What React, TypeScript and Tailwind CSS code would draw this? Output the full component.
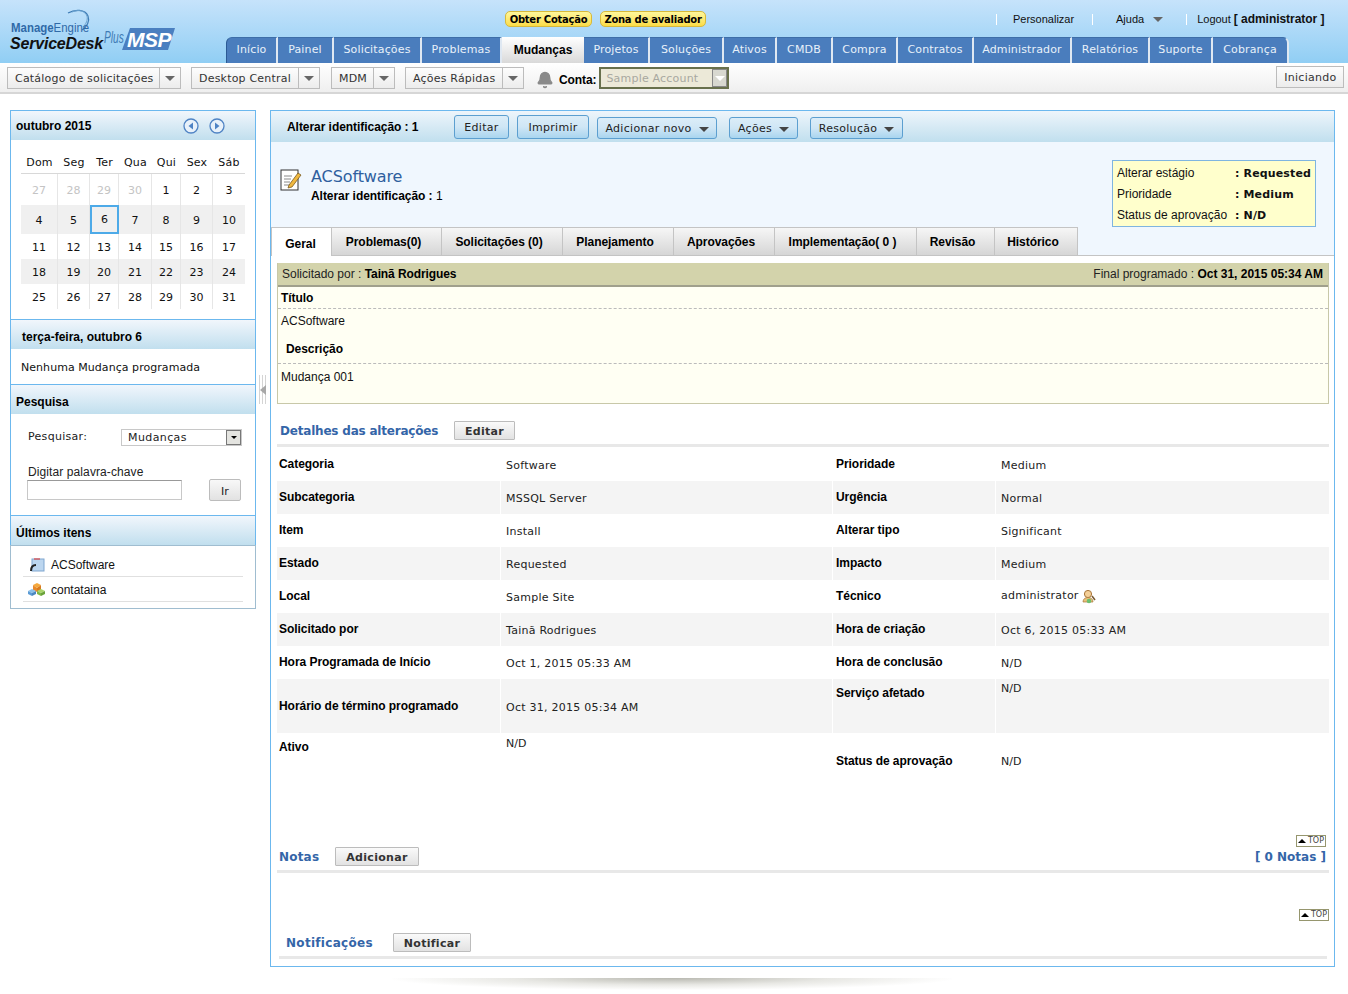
import { Bell } from "lucide-react";

const arial = "font-['Liberation_Sans',Arial,sans-serif]";
const verd = "font-['DejaVu_Sans',Verdana,sans-serif]";

const navTabs = [
  ["Início", "w-[52px]", "rounded-tl-[6px] border-l border-l-[#2b5a94]"],
  ["Painel", "w-[56px]", ""],
  ["Solicitações", "w-[88px]", ""],
  ["Problemas", "w-[80px]", ""],
  ["Mudanças", "w-[82px]", "active"],
  ["Projetos", "w-[66px]", ""],
  ["Soluções", "w-[74px]", ""],
  ["Ativos", "w-[53px]", ""],
  ["CMDB", "w-[56px]", ""],
  ["Compra", "w-[65px]", ""],
  ["Contratos", "w-[76px]", ""],
  ["Administrador", "w-[98px]", ""],
  ["Relatórios", "w-[78px]", ""],
  ["Suporte", "w-[63px]", ""],
  ["Cobrança", "w-[76px]", "rounded-tr-[6px] border-r border-r-[#2b5a94]"],
];

const calDays = ["Dom", "Seg", "Ter", "Qua", "Qui", "Sex", "Sáb"];
const calRows = [
  { h: "h-[31px]", bg: "", days: ["27", "28", "29", "30", "1", "2", "3"] },
  { h: "h-[29px]", bg: "bg-[#f0f0f0]", days: ["4", "5", "6", "7", "8", "9", "10"] },
  { h: "h-[25px]", bg: "", days: ["11", "12", "13", "14", "15", "16", "17"] },
  { h: "h-[25px]", bg: "bg-[#f0f0f0]", days: ["18", "19", "20", "21", "22", "23", "24"] },
  { h: "h-[25px]", bg: "", days: ["25", "26", "27", "28", "29", "30", "31"] },
];

const mainTabs = [
  ["Problemas(0)", "w-[110px]"],
  ["Solicitações (0)", "w-[121px]"],
  ["Planejamento", "w-[111px]"],
  ["Aprovações", "w-[101px]"],
  ["Implementação( 0 )", "w-[142px]"],
  ["Revisão", "w-[78px]"],
  ["Histórico", "w-[84px]"],
];

const details = [
  ["Categoria", "Software", "Prioridade", "Medium"],
  ["Subcategoria", "MSSQL Server", "Urgência", "Normal"],
  ["Item", "Install", "Alterar tipo", "Significant"],
  ["Estado", "Requested", "Impacto", "Medium"],
  ["Local", "Sample Site", "Técnico", "administrator"],
  ["Solicitado por", "Tainã Rodrigues", "Hora de criação", "Oct 6, 2015 05:33 AM"],
  ["Hora Programada de Início", "Oct 1, 2015 05:33 AM", "Hora de conclusão", "N/D"],
];

function Logo() {
  return (
    <div className="relative h-[63px] w-[226px] shrink-0">
      <svg className="absolute left-[62px] top-[8px]" width="30" height="26" viewBox="0 0 30 26" fill="none">
        <path d="M6 5C13 1 23 1 26 8c2 5-1 11-6 14" stroke="#3f7cb5" strokeWidth="1.2" />
        <path d="M10 4c7-3 13-1 15 4 1 4-1 8-4 11" stroke="#6aa3d0" strokeWidth="1" />
      </svg>
      <span className={`absolute left-[11px] top-[20px] text-[13px] leading-[16px] font-bold text-[#2f6aa8] ${arial} scale-x-[0.88] origin-left whitespace-nowrap`}>
        Manage<span className="font-normal">Engine</span>
      </span>
      <span className={`absolute left-[10px] top-[35px] text-[16px] leading-[18px] font-bold italic text-[#111] ${arial} whitespace-nowrap tracking-[-0.2px]`}>
        ServiceDesk
      </span>
      <span className={`absolute left-[104px] top-[29px] text-[17px] leading-[18px] italic text-[#3f7cb5] ${arial} scale-x-[0.6] origin-left`}>
        Plus
      </span>
      <svg className="absolute left-[122px] top-[28px]" width="54" height="23" viewBox="0 0 54 23">
        <polygon points="8,0 53,0 46,22 0,22" fill="#4a7fc0" />
      </svg>
      <span className={`absolute left-[127px] top-[29px] text-[21px] leading-[22px] font-bold italic text-white ${arial} tracking-[-0.5px]`}>
        MSP
      </span>
    </div>
  );
}

function Caret({ cls = "border-t-[#666]" }: { cls?: string }) {
  return <span className={`inline-block h-0 w-0 border-x-[5px] border-t-[5px] border-x-transparent ${cls}`} />;
}

function SplitDrop({ label, w, ml }: { label: string; w: string; ml: string }) {
  return (
    <div className={`flex h-[22px] ${w} ${ml} items-stretch border border-[#bcbcbc] bg-gradient-to-b from-[#fdfdfd] to-[#ececec] text-[11px] tracking-[0.2px] text-[#333] ${verd}`}>
      <span className="flex flex-1 items-center whitespace-nowrap pl-[7px] pt-[3px]">{label}</span>
      <span className="flex w-[21px] items-center justify-center border-l border-[#bcbcbc]"><Caret /></span>
    </div>
  );
}

function Header() {
  return (
    <header className="flex h-[63px] bg-gradient-to-b from-[#c6e3fb] to-[#90cef4]">
      <Logo />
      <div className="flex flex-1 flex-col">
        <div className="flex h-[37px] items-start pt-[11px]">
          <span className={`ml-[279px] flex h-[16px] w-[87px] items-center justify-center whitespace-nowrap rounded-[5px] border border-[#d8b93a] bg-gradient-to-b from-[#fff79a] to-[#fbdc45] text-[10px] font-bold tracking-[-0.25px] text-black ${verd}`}>Obter Cotação</span>
          <span className={`ml-[8px] flex h-[16px] w-[106px] items-center justify-center whitespace-nowrap rounded-[5px] border border-[#d8b93a] bg-gradient-to-b from-[#fff79a] to-[#fbdc45] text-[10px] font-bold tracking-[-0.25px] text-black ${verd}`}>Zona de avaliador</span>
          <div className={`flex items-center pt-[2px] text-[11px] leading-[13px] text-[#111] ${arial}`}>
            <span className="ml-[290px] h-[11px] w-px bg-white" />
            <span className="ml-[16px] w-[79px] whitespace-nowrap">Personalizar</span>
            <span className="h-[11px] w-px bg-white" />
            <span className="ml-[23px] whitespace-nowrap">Ajuda</span>
            <span className="ml-[9px] mr-[23px] flex"><Caret /></span>
            <span className="h-[11px] w-px bg-white" />
            <span className="ml-[12px] -translate-x-[2px] whitespace-nowrap">Logout <b className="text-[12px] tracking-[-0.05px]">[ administrator ]</b></span>
          </div>
        </div>
        <nav className="flex h-[26px]">
          {navTabs.map(([name, w, extra]) =>
            extra === "active" ? (
              <span key={name} className={`flex ${w} items-center justify-center bg-gradient-to-b from-white to-[#d9d9d9] pb-[1px] text-[12px] font-bold text-black ${arial}`}>
                {name}
              </span>
            ) : (
              <span key={name} className={`flex ${w} items-center justify-center border-t border-t-[#3d6ea8] border-r-2 border-r-[#dfe8f2] bg-[#4a7dbd] pb-[1px] text-[11px] tracking-[0.15px] text-[#e8f1fa] ${verd} ${extra}`}>
                {name}
              </span>
            )
          )}
        </nav>
      </div>
    </header>
  );
}

function Toolbar() {
  return (
    <div className="flex h-[31px] items-start border-b-2 border-[#d6d6d6] bg-gradient-to-b from-white to-[#efefef] pt-[4px]">
      <SplitDrop label="Catálogo de solicitações" w="w-[174px]" ml="ml-[7px]" />
      <SplitDrop label="Desktop Central" w="w-[129px]" ml="ml-[10px]" />
      <SplitDrop label="MDM" w="w-[64px]" ml="ml-[11px]" />
      <SplitDrop label="Ações Rápidas" w="w-[119px]" ml="ml-[10px]" />
      <Bell className="ml-[12px] mt-[4px] h-[18px] w-[18px] text-[#8a8a8a]" fill="#8a8a8a" />
      <b className={`ml-[5px] mt-[4px] text-[12px] tracking-[-0.1px] text-black ${arial}`}>Conta:</b>
      <div className={`ml-[3px] flex h-[22px] w-[130px] items-center border-2 border-[#68704c] bg-[#ece9d8] pl-[5px] text-[11px] tracking-[0.2px] text-[#a8a8a0] ${verd}`}>
        <span className="flex-1 whitespace-nowrap pt-[3px]">Sample Account</span>
        <span className="flex h-full w-[15px] items-center justify-center border border-[#888] bg-[#d8d8d0]"><Caret cls="border-t-white" /></span>
      </div>
      <span className={`ml-[547px] -mt-[1px] flex h-[22px] w-[68px] items-center justify-center border border-[#bcbcbc] bg-gradient-to-b from-[#fdfdfd] to-[#ececec] pt-[3px] text-[11px] tracking-[0.3px] text-[#333] ${verd}`}>Iniciando</span>
    </div>
  );
}

function SideHead({ children, cls = "pl-[5px] pt-[4px]" }: { children: React.ReactNode; cls?: string }) {
  return (
    <div className={`flex h-[29px] items-center bg-gradient-to-b from-[#f1f6fc] to-[#c1dfee] text-[12px] font-bold text-black ${arial} ${cls}`}>
      {children}
    </div>
  );
}

function NavCircle({ dir }: { dir: "l" | "r" }) {
  return (
    <svg width="16" height="16" viewBox="0 0 16 16">
      <circle cx="8" cy="8" r="7" fill="#e8f1fa" stroke="#4f83c4" strokeWidth="1.3" />
      <polygon points={dir === "l" ? "10,4.5 10,11.5 5.5,8" : "6,4.5 6,11.5 10.5,8"} fill="#4f83c4" />
    </svg>
  );
}

function Calendar() {
  const cols = "grid grid-cols-[37px_32px_29px_33px_29px_32px_32px]";
  return (
    <div className={`px-[10px] pt-[15px] pb-[10px] text-[11px] text-[#111] ${verd}`}>
      <div className={`${cols} h-[18px]`}>
        {calDays.map((d) => (
          <span key={d} className="text-center text-[11px] tracking-[0.2px]">{d}</span>
        ))}
      </div>
      <div className="h-px bg-[#d8d8d8]" />
      {calRows.map((row, r) => (
        <div key={r} className={`${cols} ${row.h} ${row.bg}`}>
          {row.days.map((d, i) => (
            <span
              key={i}
              className={`flex items-center justify-center ${
                d === "6" ? "border-2 border-[#4daae8] pt-[1px]" : i < 6 ? "border-r border-[#e6e6e6] pt-[4px]" : "pt-[4px]"
              } ${r === 0 && i < 4 ? "text-[#c4c4c4]" : ""}`}
            >
              {d}
            </span>
          ))}
        </div>
      ))}
    </div>
  );
}

function Sidebar() {
  return (
    <aside className="ml-[10px] w-[246px] shrink-0">
      <div className="border border-[#6cb8ee] border-b-0">
        <SideHead cls="pl-[5px]">
          <span className="flex-1">outubro 2015</span>
          <span className="mr-[30px] flex gap-[10px]"><NavCircle dir="l" /><NavCircle dir="r" /></span>
        </SideHead>
        <Calendar />
        <div className="border-t border-[#6cb8ee]">
          <SideHead cls="pl-[11px] pt-[4px]">terça-feira, outubro 6</SideHead>
          <div className={`flex h-[35px] items-center pl-[10px] pt-[4px] text-[11px] tracking-[0.05px] text-[#111] ${verd}`}>Nenhuma Mudança programada</div>
        </div>
        <div className="border-t border-[#6cb8ee]">
          <SideHead>Pesquisa</SideHead>
          <div className={`h-[101px] pl-[17px] pt-[15px] text-[11px] text-[#222] ${verd}`}>
            <div className="flex h-[17px] items-center">
              <span className="w-[93px] tracking-[0.3px]">Pesquisar:</span>
              <div className="flex h-[17px] w-[121px] items-center border border-[#c8c8c8] pl-[6px] tracking-[0.4px]">
                <span className="flex-1 pt-[2px]">Mudanças</span>
                <span className="flex h-[15px] w-[15px] items-center justify-center border border-[#777] bg-[#e4e4e0]">
                  <span className="h-0 w-0 border-x-[3px] border-t-[3px] border-x-transparent border-t-black" />
                </span>
              </div>
            </div>
            <div className={`mt-[20px] text-[12px] leading-[13px] tracking-[0.1px] ${arial}`}>Digitar palavra-chave</div>
            <div className="flex items-start">
              <span className="-ml-px mt-[1px] h-[20px] w-[155px] border border-[#c8c8c8] border-t-[#999] bg-white" />
              <span className="ml-[27px] flex h-[22px] w-[32px] items-center justify-center rounded-[2px] border border-[#bcbcbc] bg-gradient-to-b from-[#f8f8f8] to-[#e2e2e2] pt-[4px] text-[#222]">Ir</span>
            </div>
          </div>
        </div>
      </div>
      <div className="border border-[#6cb8ee] border-b-0">
        <SideHead>Últimos itens</SideHead>
      </div>
      <div className={`border border-[#a0bdd0] px-[12px] pb-[6px] pt-[6px] text-[12px] text-[#111] ${arial}`}>
        <div className="flex h-[25px] items-center border-b border-[#e0e0e0] pl-[6px] pt-[1px]">
          <svg width="16" height="16" viewBox="0 0 16 16" className="mr-[6px]">
            <rect x="3" y="2" width="12" height="12" fill="#bcd6ef" stroke="#7fa6cf" />
            <path d="M5 2 L11 2" stroke="#d44" strokeWidth="1.2" />
            <path d="M2 14c0-4 2-6 5-6" stroke="#222" strokeWidth="2" fill="none" />
          </svg>
          ACSoftware
        </div>
        <div className="flex h-[25px] items-center border-b border-[#e0e0e0] pl-[5px] pt-[1px]">
          <svg width="17" height="15" viewBox="0 0 17 15" className="mr-[6px]">
            <polygon points="5,3 9,1 13,3 9,6" fill="#f5a93c" />
            <polygon points="5,3 9,6 9,10 5,8" fill="#e8892a" />
            <polygon points="13,3 9,6 9,10 13,8" fill="#d97a1e" />
            <polygon points="0,9 4,7 8,9 4,11" fill="#8cc0ea" />
            <polygon points="0,9 4,11 4,14 0,12" fill="#5b9bd5" />
            <polygon points="8,9 4,11 4,14 8,12" fill="#4a86c0" />
            <polygon points="9,9 13,7 17,9 13,11" fill="#a9d46a" />
            <polygon points="9,9 13,11 13,14 9,12" fill="#7fb646" />
            <polygon points="17,9 13,11 13,14 17,12" fill="#6aa23a" />
          </svg>
          contataina
        </div>
      </div>
    </aside>
  );
}

function Splitter() {
  return (
    <div className="ml-[3px] mr-[3px] mt-[265px] flex h-[29px] w-[8px] shrink-0 items-center justify-center bg-[repeating-linear-gradient(90deg,#d4d4d4_0,#d4d4d4_1px,#fff_1px,#fff_3px)]">
      <span className="h-0 w-0 border-y-[5px] border-r-[6px] border-y-transparent border-r-[#a8a8a8]" />
    </div>
  );
}

function BlueBtn({ label, w, ml, caret, big }: { label: string; w: string; ml: string; caret?: boolean; big?: boolean }) {
  return (
    <span className={`flex ${big ? "h-[24px] -mt-[2px]" : "h-[22px]"} ${w} ${ml} items-center justify-center gap-[7px] rounded-[3px] border border-[#5c9fd0] bg-gradient-to-b from-[#dcedf8] via-[#cfe6f5] to-[#a9d5ef] pt-[3px] text-[11px] tracking-[0.3px] text-[#222] ${verd}`}>
      {label}
      {caret && <Caret cls="border-t-[#444]" />}
    </span>
  );
}

function GrayBtn({ label, w, ml }: { label: string; w: string; ml: string }) {
  return (
    <span className={`flex h-[19px] ${w} ${ml} items-center justify-center rounded-[1px] border border-[#bcbcbc] bg-gradient-to-b from-[#fafafa] to-[#e2e2e2] pt-[4px] text-[11px] font-bold tracking-[0.3px] text-[#333] ${verd}`}>
      {label}
    </span>
  );
}

function TopLink({ cls }: { cls: string }) {
  return (
    <div className={`flex h-[12px] w-[30px] items-center justify-center gap-[2px] border border-[#96966e] bg-white text-[8px] leading-none text-[#444] ${verd} ${cls}`}>
      <span className="h-0 w-0 border-x-[4px] border-b-[4px] border-x-transparent border-b-black" />
      TOP
    </div>
  );
}

function Label({ children, cls = "" }: { children: React.ReactNode; cls?: string }) {
  return <b className={`text-[12px] tracking-[-0.05px] text-black ${arial} ${cls}`}>{children}</b>;
}

function DetailsTable() {
  const grid = "grid grid-cols-[223px_331px_162px_333px] gap-x-px";
  const val = `flex items-center pl-[5px] text-[11px] tracking-[0.25px] text-[#222] ${verd}`;
  const lab = "flex items-center pb-[2px]";
  return (
    <div className="ml-[6px] mr-[5px] pt-[1px]">
      {details.map((r, i) => {
        const bg = i % 2 ? "bg-[#f4f4f4]" : "";
        return (
          <div key={r[0]} className={`${grid} h-[33px]`}>
            <div className={`${lab} ${bg} pl-[2px]`}><Label>{r[0]}</Label></div>
            <div className={`${val} ${bg} pt-[4px]`}>{r[1]}</div>
            <div className={`${lab} ${bg} pl-[3px]`}><Label>{r[2]}</Label></div>
            <div className={`${val} ${bg} ${r[3] === "administrator" ? "" : "pt-[4px]"}`}>
              {r[3]}
              {r[3] === "administrator" && (
                <svg width="14" height="15" viewBox="0 0 14 15" className="ml-[3px]">
                  <circle cx="6" cy="5" r="3.6" fill="#f4cf98" stroke="#a8763a" />
                  <path d="M1 13c0-3 2-4.5 5-4.5s5 1.5 5 4.5z" fill="#e8c27a" stroke="#a8763a" strokeWidth="0.7" />
                  <circle cx="7" cy="12" r="2.3" fill="#6cc070" />
                  <path d="M10 7l3 4" stroke="#7a5a30" strokeWidth="1.5" />
                </svg>
              )}
            </div>
          </div>
        );
      })}
      <div className={`${grid} h-[54px]`}>
        <div className="flex items-center bg-[#f4f4f4] pl-[2px]"><Label>Horário de término programado</Label></div>
        <div className={`${val} bg-[#f4f4f4] pt-[4px]`}>Oct 31, 2015 05:34 AM</div>
        <div className="bg-[#f4f4f4] pl-[3px]"><Label cls="block mt-[5px]">Serviço afetado</Label></div>
        <div className={`bg-[#f4f4f4] pl-[5px] pt-[2px] text-[11px] text-[#222] ${verd}`}>N/D</div>
      </div>
      <div className={`${grid} h-[46px]`}>
        <div className="pl-[2px]"><Label>Ativo</Label></div>
        <div className={`pl-[5px] pt-[3px] text-[11px] text-[#222] ${verd}`}>N/D</div>
        <div className="pl-[3px] pt-[14px]"><Label>Status de aprovação</Label></div>
        <div className={`pl-[5px] pt-[21px] text-[11px] text-[#222] ${verd}`}>N/D</div>
      </div>
    </div>
  );
}

function MainPanel() {
  return (
    <main className="h-[857px] w-[1065px] shrink-0 border border-[#6cb8ee]">
      <div className="flex h-[31px] items-center bg-gradient-to-b from-[#eef5fb] to-[#c0dfee] pt-[2px]">
        <Label cls="ml-[16px] w-[167px] -mt-[2px]">Alterar identificação : 1</Label>
        <BlueBtn big label="Editar" w="w-[55px]" ml="" />
        <BlueBtn big label="Imprimir" w="w-[72px]" ml="ml-[8px]" />
        <BlueBtn caret label="Adicionar novo" w="w-[120px]" ml="ml-[8px]" />
        <BlueBtn caret label="Ações" w="w-[69px]" ml="ml-[12px]" />
        <BlueBtn caret label="Resolução" w="w-[93px]" ml="ml-[12px]" />
      </div>
      <div className="relative h-[85px] bg-[#f0f7fe]">
        <div className="flex items-start pl-[9px] pt-[26px]">
          <svg width="22" height="24" viewBox="0 0 22 24" className="mr-[9px]">
            <rect x="1" y="2" width="17" height="20" fill="#fff" stroke="#333" />
            <path d="M4 8h8M4 11h7M4 14h6M4 17h6" stroke="#8a8a8a" />
            <path d="M9 17l9-12 3 2-9 12-4 1z" fill="#f0b840" stroke="#6a4a10" strokeWidth="0.7" />
          </svg>
          <div>
            <div className={`text-[16px] leading-[18px] tracking-[-0.1px] text-[#2f5f9e] ${verd}`}>ACSoftware</div>
            <div className={`mt-[3px] text-[12px] leading-[14px] text-black ${arial}`}><b className="tracking-[-0.05px]">Alterar identificação :</b> 1</div>
          </div>
        </div>
        <div className={`absolute left-[841px] top-[18px] h-[67px] w-[204px] border border-[#7fb5e0] bg-[#ffffcc] pl-[4px] pt-[2px] text-[12px] leading-[21px] text-[#111] ${arial}`}>
          <div className="flex"><span className="w-[118px]">Alterar estágio</span><b className={`text-[11px] tracking-[0.15px] ${verd}`}>: Requested</b></div>
          <div className="flex"><span className="w-[118px]">Prioridade</span><b className={`text-[11px] tracking-[0.15px] ${verd}`}>: Medium</b></div>
          <div className="flex"><span className="w-[118px] whitespace-nowrap">Status de aprovação</span><b className={`text-[11px] tracking-[0.15px] ${verd}`}>: N/D</b></div>
        </div>
      </div>
      <div className={`flex h-[29px] border-b border-[#c4c4c4] bg-[#f0f7fe] text-[12px] font-bold text-black ${arial}`}>
        <span className="flex h-[29px] w-[60px] items-center justify-center border-l border-t border-[#c4c4c4] bg-white pr-[2px] pt-[3px]">Geral</span>
        {mainTabs.map(([name, w]) => (
          <span key={name} className={`flex h-[28px] ${w} items-center justify-center border-l border-t border-[#c4c4c4] bg-gradient-to-b from-[#f6f6f6] to-[#d6d6d6] pr-[6px] tracking-[-0.05px] last:border-r`}>
            {name}
          </span>
        ))}
      </div>
      <div className="ml-[6px] mr-[5px] mt-[7px] border border-[#c8c8a8] border-t-0 bg-[#fffff3]">
        <div className={`flex h-[24px] items-center justify-between border-b-2 border-[#a0a08c] bg-[#d3d3ab] px-[4px] text-[12px] text-[#222] ${arial}`}>
          <span>Solicitado por : <b className="tracking-[-0.1px] text-black">Tainã Rodrigues</b></span>
          <span className="pr-[1px]">Final programado : <b className="text-black">Oct 31, 2015 05:34 AM</b></span>
        </div>
        <div className="flex h-[22px] items-center border-b border-dashed border-[#bbb] pl-[3px]"><Label>Título</Label></div>
        <div className={`flex h-[24px] items-center pl-[3px] text-[12px] text-[#111] ${arial}`}>ACSoftware</div>
        <div className="flex h-[31px] items-center border-b border-dashed border-[#bbb] pl-[8px] pt-[2px]"><Label>Descrição</Label></div>
        <div className={`h-[39px] pl-[3px] pt-[6px] text-[12px] leading-[14px] text-[#111] ${arial}`}>Mudança 001</div>
      </div>
      <div className="mx-[6px] mt-[17px] flex h-[19px] items-center">
        <span className={`ml-[3px] w-[174px] whitespace-nowrap text-[12px] font-bold tracking-[-0.2px] text-[#3465a8] ${verd}`}>Detalhes das alterações</span>
        <GrayBtn label="Editar" w="w-[61px]" ml="" />
      </div>
      <div className="ml-[6px] mr-[5px] mt-[4px] h-[3px] bg-[#e8e8e8]" />
      <DetailsTable />
      <TopLink cls="ml-[1025px] mt-[56px]" />
      <div className="ml-[6px] mr-[8px] flex h-[19px] items-center justify-between pl-[2px]">
        <div className="flex items-center">
          <span className={`w-[56px] text-[12px] font-bold tracking-[0.2px] text-[#3465a8] ${verd}`}>Notas</span>
          <GrayBtn label="Adicionar" w="w-[84px]" ml="" />
        </div>
        <span className={`text-[12px] font-bold text-[#3465a8] ${verd}`}>[ 0 Notas ]</span>
      </div>
      <div className="ml-[6px] mr-[5px] mt-[4px] h-[3px] bg-[#e8e8e8]" />
      <TopLink cls="ml-[1028px] mt-[36px]" />
      <div className="ml-[15px] mt-[12px] flex h-[19px] items-center">
        <span className={`w-[107px] whitespace-nowrap text-[12px] font-bold tracking-[0.3px] text-[#3465a8] ${verd}`}>Notificações</span>
        <GrayBtn label="Notificar" w="w-[78px]" ml="" />
      </div>
      <div className="ml-[8px] mr-[7px] mt-[4px] h-[3px] bg-[#e8e8e8]" />
    </main>
  );
}

export default function App() {
  return (
    <div className="h-[994px] w-[1348px] overflow-hidden bg-white">
      <Header />
      <Toolbar />
      <div className="mt-[16px] flex items-start">
        <Sidebar />
        <Splitter />
        <MainPanel />
      </div>
      <div className="mx-auto mt-[11px] h-[12px] w-[560px] -translate-x-[2px] bg-[radial-gradient(ellipse_at_top,#b8b8b0_0%,#e8e8e4_40%,transparent_72%)]" />
    </div>
  );
}
